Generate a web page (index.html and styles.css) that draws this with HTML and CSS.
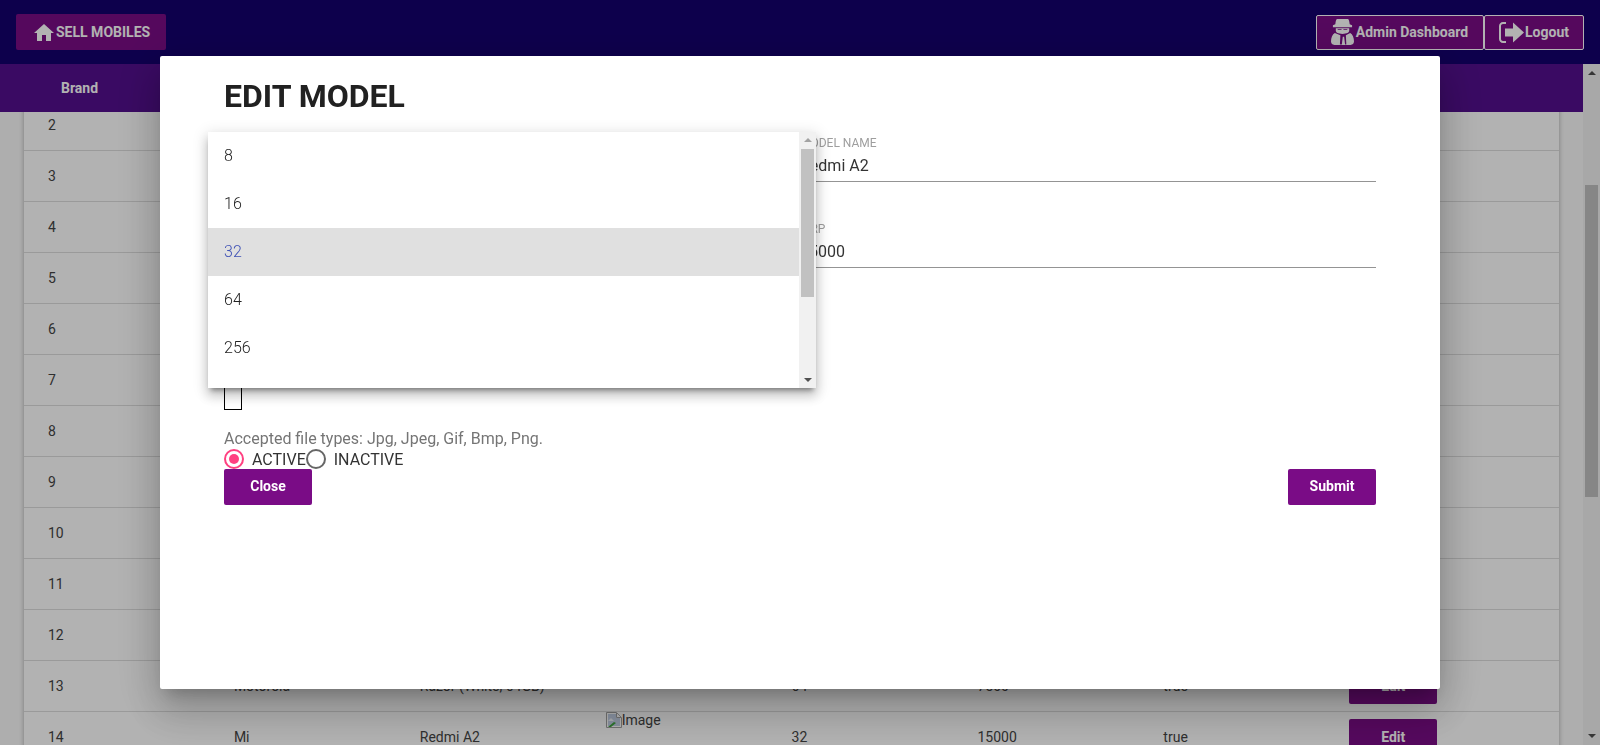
FILE: index.html
```html
<!DOCTYPE html>
<html lang="en">
<head>
    <meta charset="UTF-8">
    <meta name="viewport" content="width=device-width, initial-scale=1.0">
    <title>Sell Mobiles</title>
    <link rel="stylesheet" href="styles.css">
</head>
<body>
    <header class="topbar">
        <a class="btn-home">
            <svg class="icon-home" viewBox="2 3 20 17"><path d="M10 20v-6h4v6h5v-8h3L12 3 2 12h3v8z"/></svg>
            SELL MOBILES
        </a>
        <div class="topbar-right">
            <a class="btn-outline">
                <svg class="icon-spy" viewBox="0 0 24 27">
                    <path d="M6.500 0h11c1 0 1.500 1.500 2 5.500L22 6.500v2H2v-2l2.500-1C5 1.500 5.500 0 6.500 0z"/>
                    <path fill-rule="evenodd" d="M5 9.500h14v2.500c0 2.200-2.500 3.500-7 3.500S5 14.200 5 12zM7 10.500v1h4v-1zM13 10.500v1h4v-1z"/>
                    <path d="M4 14.500C1.500 16 0 19 0 23.500 0 25.500 1.500 27 3.500 27h17c2 0 3.500-1.500 3.500-3.500 0-4.500-1.500-7.500-4-9l-4.500 2.500.5 9.500h-1.300l-1-8h-1.400l-1 8H9.300l.5-9.500z"/>
                </svg>
                Admin Dashboard
            </a>
            <a class="btn-outline btn-logout">
                <svg class="icon-logout" viewBox="0 0 25 21">
                    <path d="M7 0H4C1.800 0 0 1.800 0 4v13c0 2.200 1.800 4 4 4h3v-2H4c-1.100 0-2-.9-2-2V4c0-1.100.9-2 2-2h3z"/>
                    <path d="M6 6.500h8V.5L25 10.500 14 20.500v-6H6z"/>
                </svg>
                Logout
            </a>
        </div>
    </header>

    <div class="content">
        <main class="main">
            <div class="thead"><span>Brand</span></div>
            <div class="tbody">
                <div class="table">
                    <div class="row"><span>2</span></div>
                    <div class="row"><span>3</span></div>
                    <div class="row"><span>4</span></div>
                    <div class="row"><span>5</span></div>
                    <div class="row"><span>6</span></div>
                    <div class="row"><span>7</span></div>
                    <div class="row"><span>8</span></div>
                    <div class="row"><span>9</span></div>
                    <div class="row"><span>10</span></div>
                    <div class="row"><span>11</span></div>
                    <div class="row"><span>12</span></div>
                    <div class="row">
                        <span>13</span><span>Motorola</span><span>Razor (White, 64GB)</span><span></span>
                        <span>64</span><span>7500</span><span>true</span>
                        <span><a class="btn-edit">Edit</a></span>
                    </div>
                    <div class="row">
                        <span>14</span><span>Mi</span><span>Redmi A2</span>
                        <span class="cell-image">
                            <svg class="icon-broken" viewBox="0 0 16 16">
                                <path d="M.5.500h10l5 5v10H.5z" fill="#fff" stroke="#a0a0a0"/>
                                <path d="M2 2h8v4h4v8H2z" fill="#c3d0e6"/>
                                <path d="M2 9l3-3 3 3z" fill="#f2f5fa"/>
                                <path d="M2 15l6-5 2 1-5 4z" fill="#3fa53f"/>
                                <path d="M10.500 1v4.500H15" fill="#fff" stroke="#a0a0a0"/>
                            </svg>Image
                        </span>
                        <span>32</span><span>15000</span><span>true</span>
                        <span><a class="btn-edit">Edit</a></span>
                    </div>
                </div>
            </div>
        </main>
        <div class="scrollbar">
            <i class="arrow-up"></i>
            <div class="scrollbar-track"><div class="scrollbar-thumb"></div></div>
            <i class="arrow-down"></i>
        </div>
    </div>

    <div class="overlay"></div>

    <div class="modal">
        <h1>EDIT MODEL</h1>
        <div class="fields">
            <div class="field">
                <label>Model Name</label>
                <div class="field-value">Redmi A2</div>
            </div>
            <div class="field">
                <label>MRP</label>
                <div class="field-value">15000</div>
            </div>
        </div>
        <div class="file-box"></div>
        <p class="hint">Accepted file types: Jpg, Jpeg, Gif, Bmp, Png.</p>
        <div class="radios">
            <span class="radio radio-on"></span><span class="radio-label">ACTIVE</span>
            <span class="radio"></span><span class="radio-label">INACTIVE</span>
        </div>
        <div class="actions">
            <button type="button">Close</button>
            <button type="button">Submit</button>
        </div>

        <div class="dropdown">
            <ul>
                <li>8</li>
                <li>16</li>
                <li class="selected">32</li>
                <li>64</li>
                <li>256</li>
            </ul>
            <div class="dropdown-scroll">
                <i class="arrow-up faded"></i>
                <div class="scrollbar-track"><div class="dropdown-thumb"></div></div>
                <i class="arrow-down"></i>
            </div>
        </div>
    </div>
</body>
</html>
```

FILE: styles.css
```css
* {
    box-sizing: border-box;
}
body {
    font-family: Roboto, Arial, sans-serif;
    font-size: 14px;
    color: #444;
    background-color: #fafafa;
    height: 745px;
    margin: 0;
    overflow: hidden;
    display: flex;
    flex-direction: column;
}

/* barra superior */
.topbar {
    height: 64px;
    flex: none;
    background-color: #14006e;
    display: flex;
    justify-content: space-between;
    align-items: center;
    padding: 0 16px;
}
.btn-home {
    height: 36px;
    padding: 0 16px 0 18px;
    background-color: #7a0c86;
    color: white;
    font-weight: 700;
    border-radius: 2px;
    display: flex;
    align-items: center;
    gap: 2px;
}
.icon-home {
    width: 20px;
    height: 17px;
    fill: white;
}
.topbar-right {
    display: flex;
}
.btn-outline {
    height: 35px;
    padding: 0 15px 0 14px;
    background-color: #7a0c86;
    color: white;
    font-weight: 700;
    border: 1px solid white;
    border-radius: 2px;
    display: flex;
    align-items: center;
    gap: 2px;
}
.btn-logout {
    padding-right: 14px;
    gap: 1px;
}
.icon-spy {
    width: 23px;
    height: 26px;
    fill: white;
}
.icon-logout {
    width: 25px;
    height: 21px;
    fill: white;
}

/* tabela */
.content {
    flex: 1;
    min-height: 0;
    display: flex;
}
.main {
    flex: 1;
    min-width: 0;
    display: flex;
    flex-direction: column;
}
.thead {
    height: 48px;
    flex: none;
    background-color: #530f8e;
    color: white;
    font-weight: 700;
    padding-left: 61px;
    display: flex;
    align-items: center;
}
.tbody {
    flex: 1;
    overflow: hidden;
    padding: 0 24px;
}
.table {
    margin-top: -12px;
    background: white;
    box-shadow: 0 2px 5px rgba(0, 0, 0, 0.3);
}
.row {
    height: 51px;
    border-bottom: 1px solid #ddd;
    display: grid;
    grid-template-columns: repeat(7, 185.9px) 1fr;
    align-items: center;
}
.row > span {
    padding-left: 24px;
}
.cell-image {
    align-self: start;
    display: flex;
    align-items: center;
    height: 16px;
}
.icon-broken {
    width: 16px;
    height: 16px;
}
.btn-edit {
    width: 88px;
    height: 36px;
    background-color: #7a0c86;
    color: white;
    font-weight: 700;
    border-radius: 2px;
    display: flex;
    justify-content: center;
    align-items: center;
}

/* barra de rolagem */
.scrollbar {
    width: 17px;
    flex: none;
    background-color: #f1f1f1;
    display: flex;
    flex-direction: column;
    align-items: center;
    padding: 7px 0;
}
.scrollbar-track {
    flex: 1;
    width: 100%;
    padding: 0 2px;
}
.scrollbar-thumb {
    height: 312px;
    margin-top: 110px;
    background-color: #c1c1c1;
}
.arrow-up, .arrow-down {
    width: 0;
    height: 0;
    border-left: 4px solid transparent;
    border-right: 4px solid transparent;
}
.arrow-up {
    border-bottom: 4px solid #505050;
}
.arrow-down {
    border-top: 4px solid #505050;
}
.arrow-up.faded {
    border-bottom-color: #a3a3a3;
}

/* modal */
.overlay {
    position: fixed;
    inset: 0;
    background-color: rgba(0, 0, 0, 0.3);
}
.modal {
    position: fixed;
    left: 160px;
    top: 56px;
    width: 1280px;
    height: 633px;
    padding: 22px 64px 0;
    background: white;
    border-radius: 2px;
    box-shadow: 0 24px 38px 3px rgba(0, 0, 0, 0.14), 0 9px 46px 8px rgba(0, 0, 0, 0.12), 0 11px 15px -7px rgba(0, 0, 0, 0.2);
}
h1 {
    font-size: 32px;
    font-weight: 700;
    line-height: 36px;
    color: #212121;
    margin: 0;
}
.fields {
    margin: 20px 0 0 576px;
    height: 242px;
}
.field {
    height: 86px;
    padding-top: 2px;
}
label {
    display: block;
    font-size: 12px;
    line-height: 14px;
    color: #9e9e9e;
    text-transform: uppercase;
}
.field-value {
    font-size: 16px;
    line-height: 20px;
    color: #333;
    height: 32px;
    padding-top: 6px;
    border-bottom: 1px solid #949494;
}
.file-box {
    width: 18px;
    height: 34px;
    border: 1px solid black;
}
.hint {
    font-size: 16px;
    line-height: 20px;
    color: #757575;
    margin: 19px 0 0;
}
.radios {
    height: 20px;
    display: flex;
    align-items: center;
    font-size: 16px;
}
.radio {
    width: 20px;
    height: 20px;
    flex: none;
    border: 2px solid #666;
    border-radius: 50%;
    display: flex;
    justify-content: center;
    align-items: center;
}
.radio-on {
    border-color: #ff4081;
}
.radio-on::after {
    content: "";
    width: 10px;
    height: 10px;
    border-radius: 50%;
    background-color: #ff4081;
}
.radio-label {
    margin-left: 8px;
    color: #333;
}
.actions {
    display: flex;
    justify-content: space-between;
}
button {
    width: 88px;
    height: 36px;
    padding: 0 0 2px;
    background-color: #7a0c86;
    color: white;
    font-family: Roboto, Arial, sans-serif;
    font-size: 14px;
    font-weight: 700;
    border: none;
    border-radius: 2px;
}

/* lista do select aberta */
.dropdown {
    position: absolute;
    left: 48px;
    top: 76px;
    width: 608px;
    height: 256px;
    background: white;
    display: flex;
    box-shadow: 0 8px 10px 1px rgba(0, 0, 0, 0.14), 0 3px 14px 2px rgba(0, 0, 0, 0.12), 0 5px 5px -3px rgba(0, 0, 0, 0.4);
}
ul {
    list-style: none;
    margin: 0;
    padding: 0;
    flex: 1;
}
li {
    height: 48px;
    padding: 0 0 2px 16px;
    font-size: 16px;
    font-weight: 300;
    color: #222;
    display: flex;
    align-items: center;
}
li.selected {
    background-color: #e0e0e0;
    color: #3f51b5;
}
.dropdown-scroll {
    width: 17px;
    flex: none;
    background-color: #f1f1f1;
    display: flex;
    flex-direction: column;
    align-items: center;
    padding: 6px 0;
}
.dropdown-thumb {
    height: 148px;
    margin-top: 7px;
    background-color: #c1c1c1;
}
```
